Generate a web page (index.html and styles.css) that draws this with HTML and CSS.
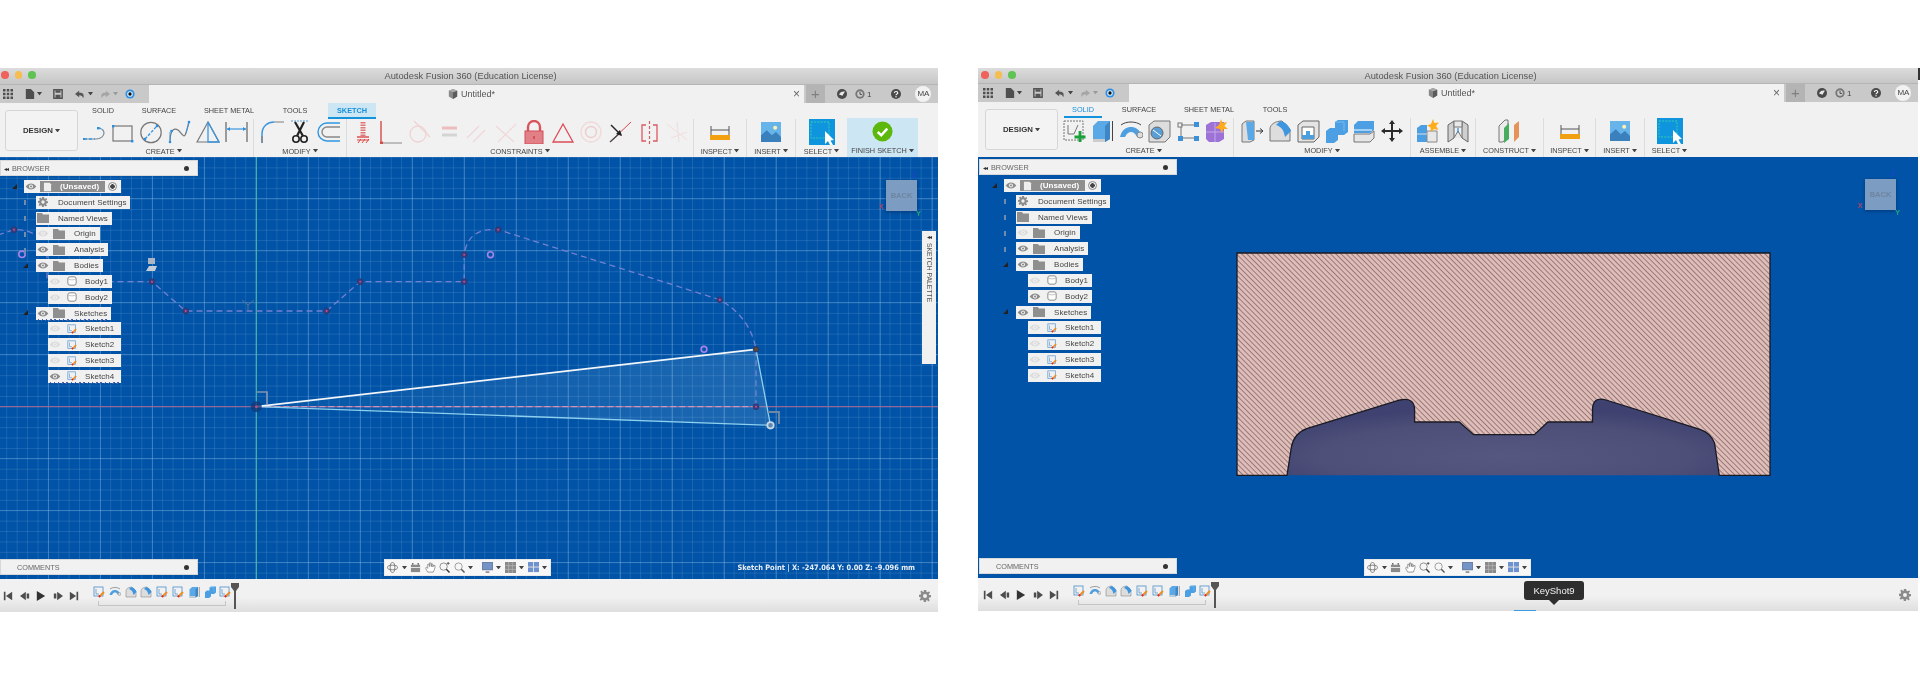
FILE: index.html
```html
<!DOCTYPE html>
<html lang="en">
<head>
<meta charset="utf-8">
<title>Autodesk Fusion 360</title>
<link rel="stylesheet" href="styles.css">
</head>
<body>
<svg class="defs" aria-hidden="true">
<defs>
<pattern id="hatch" patternUnits="userSpaceOnUse" width="3.7" height="3.7" patternTransform="rotate(45)"><rect width="3.7" height="3.7" fill="#dfbdb9"/><path d="M0 .5H3.7" stroke="#866868" stroke-width=".8"/></pattern>
<radialGradient id="hollow" cx=".5" cy=".75" r=".62"><stop offset="0" stop-color="#565780"/><stop offset=".7" stop-color="#4d4f78"/><stop offset="1" stop-color="#3f4270"/></radialGradient>
<linearGradient id="tfill" x1="0" y1="0" x2="1" y2="0"><stop offset="0" stop-color="#a8cdea" stop-opacity=".03"/><stop offset="1" stop-color="#a8cdea" stop-opacity=".17"/></linearGradient>
<linearGradient id="blueface" x1="0" y1="0" x2="0" y2="1"><stop offset="0" stop-color="#66b0e8"/><stop offset="1" stop-color="#3f8fd0"/></linearGradient>
</defs>
<symbol id="line" viewBox="0 0 24 24"><path d="M2 19H14C19 19 22 16 22 13S19 8 16 8" fill="none" stroke="#7a8b99" stroke-width="1.2"/><path d="M2 19H13M16 8C18 8 20 9 21 10" fill="none" stroke="#3d9ae0" stroke-width="1.3" stroke-dasharray="3 2"/><rect x="1" y="18" width="2" height="2" fill="#2b8fe0"/><rect x="15" y="7" width="2.4" height="2.4" fill="#2b8fe0"/></symbol>
<symbol id="rect" viewBox="0 0 24 24"><rect x="3" y="6" width="19" height="15" fill="none" stroke="#777" stroke-width="1.2"/><rect x="2" y="5" width="2.4" height="2.4" fill="#2b8fe0"/><rect x="21" y="20" width="2.4" height="2.4" fill="#2b8fe0"/></symbol>
<symbol id="circ" viewBox="0 0 24 24"><circle cx="12" cy="12.5" r="10.2" fill="none" stroke="#777" stroke-width="1.2"/><path d="M6 19L18 6" stroke="#3a96e0" stroke-width="1.4" stroke-dasharray="3 1.5"/><circle cx="6" cy="19" r="1.3" fill="#2b8fe0"/><circle cx="18" cy="6" r="1.3" fill="#2b8fe0"/></symbol>
<symbol id="spline" viewBox="0 0 24 24"><path d="M3 23C3 8 8 8 11 10S17 20 19 13S21 4 22 2" fill="none" stroke="#777" stroke-width="1.2"/><circle cx="3" cy="22" r="1.3" fill="#2b8fe0"/><circle cx="4.5" cy="11" r="1.3" fill="#2b8fe0"/><circle cx="22" cy="2" r="1.3" fill="#2b8fe0"/><path d="M3 22V12M19 13L22 3" stroke="#3a96e0" stroke-width="1"/></symbol>
<symbol id="tri" viewBox="0 0 24 24"><path d="M1 22L12 2L23 22Z" fill="none" stroke="#777" stroke-width="1.2"/><path d="M12 2L23 22H12Z" fill="none" stroke="#3a96e0" stroke-width="1.3"/></symbol>
<symbol id="dim" viewBox="0 0 24 24"><path d="M2 2V22M23 2V22" stroke="#777" stroke-width="1.4"/><path d="M3 9H22" stroke="#3a96e0" stroke-width="1.2"/><path d="M3 9l3-2v4zM22 9l-3-2v4z" fill="#2b8fe0"/></symbol>
<symbol id="fillet" viewBox="0 0 24 24"><path d="M2 23V14C2 6 8 2 14 2" fill="none" stroke="#3a96e0" stroke-width="1.5"/><path d="M14 2H24" stroke="#999" stroke-width="1.3"/><path d="M2 23V16" stroke="#888" stroke-width="1.6"/></symbol>
<symbol id="scis" viewBox="0 0 24 24"><path d="M3 1H21" stroke="#8fb8dc" stroke-width="1.3" stroke-dasharray="2 1"/><path d="M7 2L15 16M16 2L9 16" stroke="#222" stroke-width="2.2"/><circle cx="8" cy="19" r="3.2" fill="none" stroke="#222" stroke-width="1.6"/><circle cx="16" cy="19" r="3.2" fill="none" stroke="#222" stroke-width="1.6"/></symbol>
<symbol id="offs" viewBox="0 0 24 24"><path d="M24 3H11A9 9 0 0 0 11 21H24" fill="none" stroke="#2e96e2" stroke-width="1.4"/><path d="M24 7H11A5 5 0 0 0 11 17H24" fill="none" stroke="#888" stroke-width="1.4"/></symbol>
<symbol id="hatchc" viewBox="0 0 24 24"><path d="M12 2v14" stroke="#d77" stroke-width="5" stroke-dasharray="1.5 1"/><path d="M6 17H18" stroke="#d44" stroke-width="1.4"/><path d="M7 23l3-4M11 23l3-4M15 23l3-4" stroke="#d44" stroke-width="1"/><path d="M6 20H18" stroke="#d44"/></symbol>
<symbol id="perp" viewBox="0 0 24 24"><path d="M2 1V23" stroke="#d64a4a" stroke-width="1.4"/><path d="M2 23H23" stroke="#999" stroke-width="1.2"/><rect x="1" y="21.5" width="3" height="3" fill="#d64a4a"/></symbol>
<symbol id="tang" viewBox="0 0 24 24"><circle cx="10" cy="14" r="8" fill="none" stroke="#f0d2d2" stroke-width="1.3"/><path d="M6 1L22 17" stroke="#f0d2d2" stroke-width="1.2"/></symbol>
<symbol id="eq" viewBox="0 0 24 24"><path d="M5 8H20" stroke="#eebcbc" stroke-width="3"/><path d="M5 15H20" stroke="#d4d4d4" stroke-width="3"/></symbol>
<symbol id="par" viewBox="0 0 24 24"><path d="M2 18L14 6M8 22L20 10" stroke="#f0d6d6" stroke-width="1.2"/></symbol>
<symbol id="cross" viewBox="0 0 24 24"><path d="M2 6L20 22M4 22L22 4" stroke="#f0d8d8" stroke-width="1.2"/></symbol>
<symbol id="lock" viewBox="0 0 24 24"><path d="M6 13V7A6 6 0 0 1 18 7V13" fill="none" stroke="#d9545f" stroke-width="2.4"/><rect x="3" y="11" width="18" height="13" fill="#e28088" stroke="#d44d58"/><path d="M12 16v3" stroke="#c23"/></symbol>
<symbol id="trg" viewBox="0 0 24 24"><path d="M12 4L22 22H2Z" fill="none" stroke="#dc4b55" stroke-width="1.3"/></symbol>
<symbol id="conc" viewBox="0 0 24 24"><circle cx="12" cy="12" r="10" fill="none" stroke="#f2dada" stroke-width="1.4"/><circle cx="12" cy="12" r="5.5" fill="none" stroke="#efcccc" stroke-width="1.4"/></symbol>
<symbol id="mid" viewBox="0 0 24 24"><path d="M2 22L23 2" stroke="#d64a4a"/><path d="M2 22L12 13" stroke="#444" stroke-width="1.2"/><path d="M3 5L13 15" stroke="#222" stroke-width="1.4"/><path d="M14 16L8 14L12 10Z" fill="#222"/></symbol>
<symbol id="sym" viewBox="0 0 24 24"><path d="M9 5H5V21H9M16 5H20V21H16" fill="none" stroke="#da5a62" stroke-width="1.3"/><path d="M12.5 1V24" stroke="#da5a62" stroke-dasharray="3 2" stroke-width="1.2"/></symbol>
<symbol id="fade" viewBox="0 0 24 24"><path d="M2 4L22 20M12 2L14 22M22 12L6 18" stroke="#f1dddd" stroke-width="1" fill="none"/></symbol>
<symbol id="ruler" viewBox="0 0 24 24"><path d="M3 6V15M21 6V15M3 10H21" stroke="#555" stroke-width="1"/><rect x="2" y="15" width="20" height="5" fill="#f0a010"/></symbol>
<symbol id="ins" viewBox="0 0 24 24"><rect width="24" height="24" fill="#66b4ea"/><circle cx="17" cy="7" r="2.4" fill="#fff0b0"/><path d="M0 24V16L7 10L13 16L18 12L24 18V24Z" fill="#3a80bc"/></symbol>
<symbol id="sel" viewBox="0 0 26 26"><rect width="26" height="26" fill="#0f94de"/><rect x="2" y="3" width="18" height="16" fill="none" stroke="#36cbb4" stroke-width="1" stroke-dasharray="2 1.2"/><path d="M16 12V25L19 22L21.5 27L24 26L21.5 21.5L25 21Z" fill="#fff"/></symbol>
<symbol id="check" viewBox="0 0 22 22"><circle cx="11" cy="11" r="10.5" fill="#5cb80c"/><path d="M6 11.5L9.7 15L16 8" fill="none" stroke="#fff" stroke-width="2.6"/></symbol>
<symbol id="sk" viewBox="0 0 24 24"><rect x="2" y="2" width="19" height="19" fill="none" stroke="#777" stroke-dasharray="2 1"/><path d="M6 6V15H12L16 6" fill="none" stroke="#777"/><path d="M18 12V23M12.5 18H23.5" stroke="#1aa23a" stroke-width="2.8"/></symbol>
<symbol id="ext" viewBox="0 0 24 24"><path d="M3 7L8 2H20V20L15 23H3Z" fill="#5aa8e6"/><path d="M3 20H15V23H3Z" fill="#ccc"/><path d="M15 7V23L20 20V2Z" fill="#3f86c4"/><path d="M22.5 2V22" stroke="#444"/></symbol>
<symbol id="rev" viewBox="0 0 24 24"><path d="M1 18C3 10 8 8 12 8S21 10 23 18H18C16 14 14 13 12 13S8 14 6 18Z" fill="#4f9fe0"/><ellipse cx="21" cy="16" rx="3" ry="3" fill="#ddd" stroke="#888"/><path d="M2 6C7 2 17 2 22 6" fill="none" stroke="#444"/></symbol>
<symbol id="hole" viewBox="0 0 24 24"><path d="M2 6L7 2H23V18L18 23H2Z" fill="#ddd" stroke="#777"/><circle cx="10" cy="14" r="6" fill="#5a9ed6" stroke="#666"/><path d="M6 11L14 17" stroke="#fff"/></symbol>
<symbol id="pat" viewBox="0 0 24 24"><path d="M5 6H19M5 8V19M7 19H19" stroke="#777" fill="none"/><rect x="2" y="4" width="4" height="4" fill="none" stroke="#777"/><rect x="18" y="3" width="5" height="5" fill="#3c90d8"/><rect x="2" y="17" width="5" height="5" fill="#3c90d8"/><rect x="18" y="17" width="5" height="5" fill="#3c90d8"/></symbol>
<symbol id="magic" viewBox="0 0 24 24"><path d="M2 6L7 3H20V20L15 23H5L2 20Z" fill="#9c72d6"/><path d="M2 13H20M11 4V23" stroke="#c5a8ea"/><path d="M17 0L18.5 4L23 3L20.5 7L24 10L19.5 10L18 14L16 10L11 9L15 6Z" fill="#ffac1c"/></symbol>
<symbol id="press" viewBox="0 0 24 24"><path d="M2 5L6 2H14V21L10 23H2Z" fill="#ddd" stroke="#777"/><path d="M6 3H14V21H8Z" fill="#5aa8e6"/><path d="M16 12H22M20 9.5L23 12L20 14.5" stroke="#333" fill="none"/></symbol>
<symbol id="rfil" viewBox="0 0 24 24"><path d="M2 22V10C2 5 8 2 14 2L22 10V22Z" fill="#ddd" stroke="#777"/><path d="M12 2C18 3 21 7 23 12L17 18C16 12 14 8 8 6Z" fill="#3f96de"/></symbol>
<symbol id="shell" viewBox="0 0 24 24"><path d="M2 6L7 2H23V18L18 23H2Z" fill="#e4e4e4" stroke="#666"/><path d="M6 8H18V20H6Z" fill="#fff" stroke="#666"/><path d="M10 12H14V16H18V20H6V16H10Z" fill="#4d9edc"/></symbol>
<symbol id="comb" viewBox="0 0 24 24"><path d="M2 12L6 9H11V3L14 1H24V13L20 16H14V21L10 24H2Z" fill="#4c9fe2"/><path d="M11 3H20V12" fill="none" stroke="#75bbef"/></symbol>
<symbol id="offf" viewBox="0 0 24 24"><path d="M2 6L6 2H22V11L18 14H2Z" fill="#4c9fe2"/><path d="M2 15H18L22 12V19L18 23H2Z" fill="#e6e6e6" stroke="#777"/><path d="M2 11H20" stroke="#fff"/></symbol>
<symbol id="move" viewBox="0 0 24 24"><path d="M12 1L15 5H13V11H19V9L23 12L19 15V13H13V19H15L12 23L9 19H11V13H5V15L1 12L5 9V11H11V5H9Z" fill="#2b2b2b"/></symbol>
<symbol id="asm" viewBox="0 0 24 24"><path d="M1 9L5 6H11V23H1Z" fill="#4c9fe2"/><path d="M11 12H21V23H11Z" fill="#e8e8e8" stroke="#888"/><path d="M1 15H11" stroke="#ddd"/><path d="M17 0L18.3 4L23 3.5L20 7L22.5 11L18 10L15 13L14.5 8.5L11 6.5L15 5Z" fill="#ffac1c"/></symbol>
<symbol id="joint" viewBox="0 0 24 24"><path d="M2 6L8 2V19L2 23ZM22 6L16 2V19L22 23Z" fill="#cfcfcf" stroke="#666"/><path d="M8 2H16V8H8ZM8 19L12 12L16 19" fill="#e9e9e9" stroke="#777"/><path d="M12 9V14" stroke="#3c90d8" stroke-width="1.3"/></symbol>
<symbol id="plane" viewBox="0 0 24 24"><path d="M1 7L7 1H10V17L5 23H1Z" fill="#ececec" stroke="#777"/><path d="M6 9L11 4V20L6 24Z" fill="#49ac61"/><path d="M16 6L21 2V18L16 23Z" fill="#e4935a"/></symbol>
<symbol id="apps" viewBox="0 0 12 12"><path d="M0 0h3v3H0zM4.5 0h3v3h-3zM9 0h3v3H9zM0 4.5h3v3H0zM4.5 4.5h3v3h-3zM9 4.5h3v3H9zM0 9h3v3H0zM4.5 9h3v3h-3zM9 9h3v3H9z" fill="#4f4f4f"/></symbol>
<symbol id="doc" viewBox="0 0 12 12"><path d="M1 0H7L11 4V12H1Z" fill="#4f4f4f"/></symbol>
<symbol id="save" viewBox="0 0 12 12"><path d="M1 1H11V11H1Z" fill="none" stroke="#555" stroke-width="1.8"/><path d="M3 1.5H9V4.5H3ZM3 7H9V11H3Z" fill="#555"/></symbol>
<symbol id="undo" viewBox="0 0 12 12"><path d="M5 2L0 6L5 10V7.5C8 7.5 9 9 10 11C11.5 6 9 4 5 4.5Z" fill="#555"/></symbol>
<symbol id="redo" viewBox="0 0 12 12"><path d="M7 2L12 6L7 10V7.5C4 7.5 3 9 2 11C.5 6 3 4 7 4.5Z" fill="#a5a5a5"/></symbol>
<symbol id="target" viewBox="0 0 12 12"><circle cx="6" cy="6" r="5.5" fill="#2f8fe4"/><circle cx="6" cy="6" r="3.4" fill="#d9ecfb"/><circle cx="6" cy="6" r="2" fill="#111"/></symbol>
<symbol id="caret" viewBox="0 0 6 4"><path d="M0 0H6L3 4Z" fill="#444"/></symbol>
<symbol id="cube" viewBox="0 0 12 12"><path d="M1 2L6 0L11 2V9L6 12L1 9Z" fill="#888"/><path d="M6 4V12L11 9V2Z" fill="#5c5c5c"/><path d="M1 2L6 0L11 2L6 4Z" fill="#aaa"/></symbol>
<symbol id="hist" viewBox="0 0 12 12"><circle cx="6" cy="6" r="6" fill="#4a4a4a"/><path d="M2.5 6.5C4 3 7 3 9.5 3L6.5 8Z" fill="#e8e8e8"/></symbol>
<symbol id="clock" viewBox="0 0 12 12"><circle cx="6" cy="6" r="5.6" fill="#777"/><circle cx="6" cy="6" r="3.4" fill="#ccc"/><path d="M6 3.5V6.5H8.3" fill="none" stroke="#333"/></symbol>
<symbol id="help" viewBox="0 0 12 12"><circle cx="6" cy="6" r="6" fill="#4a4a4a"/><path d="M4 4.7C4 2.5 8.2 2.5 8.2 4.8C8.2 6.2 6 6 6 7.5" fill="none" stroke="#fff" stroke-width="1.3"/><circle cx="6" cy="9.3" r=".8" fill="#fff"/></symbol>
<symbol id="eye" viewBox="0 0 12 8"><path d="M0 4C3 -.5 9 -.5 12 4C9 8.5 3 8.5 0 4Z" fill="currentColor"/><circle cx="6" cy="4" r="2.3" fill="#f1f1f1"/><circle cx="6" cy="4" r="1.2" fill="currentColor"/></symbol>
<symbol id="folder" viewBox="0 0 12 10"><path d="M0 0H5L6 1.500H12V10H0Z" fill="#8f8f8f"/></symbol>
<symbol id="gear" viewBox="0 0 12 12"><path d="M4.8 0H7.2L7.5 1.7L8.8 2.2L10.2 1.2L11 2.8L9.800 3.900L10.100 5.100L12 5V7.200L10.300 7.500L9.800 8.800L10.800 10.200L9.200 11.400L8.100 10.100L7.200 10.300L7 12H4.800L4.500 10.300L3.200 9.800L1.800 10.800L.6 9.200L1.900 8.100L1.700 7.200L0 7V4.800L1.700 4.500L2.200 3.200L1.200 1.800L2.800 .6L3.900 1.900L4.800 1.700Z" fill="#8b8b8b"/><circle cx="6" cy="6" r="2" fill="#f1f1f1"/></symbol>
<symbol id="body" viewBox="0 0 12 12"><rect x="1" y="1" width="10" height="10" rx="2.5" fill="#fdfdfd" stroke="#777"/><path d="M1 3.5C4 5 8 5 11 3.5" fill="none" stroke="#bbb"/></symbol>
<symbol id="skt" viewBox="0 0 12 12"><rect x="1" y="1" width="9" height="9" fill="none" stroke="#5d9bd0" stroke-width=".9"/><path d="M3 3V8H6" fill="none" stroke="#5d9bd0" stroke-width=".8"/><path d="M6 11L11 6" stroke="#f08c1e" stroke-width="1.9"/><path d="M6 11L7 9.5" stroke="#d23" stroke-width="1.9"/></symbol>
<symbol id="paper" viewBox="0 0 12 14"><path d="M1 1H9L11 3V13H1Z" fill="#eee"/></symbol>
<symbol id="first" viewBox="0 0 12 12"><path d="M1 1H3V11H1ZM11 1V11L3.5 6Z" fill="#4d4d4d"/></symbol>
<symbol id="prev" viewBox="0 0 12 12"><path d="M7 1V11L0 6ZM8 3H11V9H8Z" fill="#4d4d4d"/></symbol>
<symbol id="play" viewBox="0 0 12 12"><path d="M1 0L11 6L1 12Z" fill="#333"/></symbol>
<symbol id="next" viewBox="0 0 12 12"><path d="M5 1V11L12 6ZM1 3H4V9H1Z" fill="#4d4d4d"/></symbol>
<symbol id="last" viewBox="0 0 12 12"><path d="M9 1H11V11H9ZM1 1V11L8.5 6Z" fill="#4d4d4d"/></symbol>
<symbol id="marker" viewBox="0 0 8 26"><path d="M0 0H8V4L5 8V26H3V8L0 4Z" fill="#555"/></symbol>
<symbol id="orbit" viewBox="0 0 12 12"><ellipse cx="6" cy="6" rx="5.5" ry="2.5" fill="none" stroke="#777"/><ellipse cx="6" cy="6" rx="2.5" ry="5.5" fill="none" stroke="#777"/></symbol>
<symbol id="look" viewBox="0 0 12 12"><rect x="1" y="3" width="10" height="8" fill="#8a8a8a"/><path d="M1 6H11" stroke="#eee"/><path d="M3 1V3M9 1V3" stroke="#666" stroke-width="1.5"/></symbol>
<symbol id="hand" viewBox="0 0 12 12"><path d="M3 11C1 8 0 6 1.5 5.5L3 7V2.500L4.5 2.500L5 5V1L6.500 1L7 5V2L8.500 2.300V5.500L9.500 3.500L11 4C11 7 10 9 9 11Z" fill="#fff" stroke="#777" stroke-width=".8"/></symbol>
<symbol id="zoomp" viewBox="0 0 12 12"><circle cx="5" cy="5" r="4" fill="none" stroke="#888"/><path d="M8 8L11.5 11.5" stroke="#333" stroke-width="1.5"/><path d="M10 0V3M8.5 1.5H11.5" stroke="#555"/></symbol>
<symbol id="zoomf" viewBox="0 0 12 12"><circle cx="5" cy="5" r="4" fill="none" stroke="#999"/><path d="M8 8L11.5 11.5" stroke="#555" stroke-width="1.5"/></symbol>
<symbol id="disp" viewBox="0 0 12 12"><rect width="12" height="9" fill="#6b7f9e"/><rect x="1" y="1" width="10" height="7" fill="#7494c8"/><path d="M4 11H8" stroke="#777" stroke-width="1.5"/></symbol>
<symbol id="gridv" viewBox="0 0 12 12"><rect width="12" height="12" fill="#8a8a8a"/><path d="M4 0V12M8 0V12M0 4H12M0 8H12" stroke="#bbb" stroke-width=".7"/></symbol>
<symbol id="views" viewBox="0 0 12 12"><rect width="12" height="11" fill="#6d92cf"/><path d="M6 0V11M0 5.500H12" stroke="#e6e6e6"/></symbol>
</svg>

<div class="page">

<section class="win win-l">
  <header class="titlebar">
    <div class="lights"><i class="red"></i><i class="amber"></i><i class="green"></i></div>
    <span>Autodesk Fusion 360 (Education License)</span>
  </header>
  <div class="tabbar">
    <div class="qat">
      <svg class="q apps"><use href="#apps"/></svg>
      <svg class="q file"><use href="#doc"/></svg><svg class="c"><use href="#caret"/></svg>
      <svg class="q save"><use href="#save"/></svg>
      <svg class="q undo"><use href="#undo"/></svg><svg class="c"><use href="#caret"/></svg>
      <svg class="q redo"><use href="#redo"/></svg><svg class="c dim"><use href="#caret"/></svg>
      <svg class="q tgt"><use href="#target"/></svg>
    </div>
    <div class="doctab"><div class="docname"><svg class="q"><use href="#cube"/></svg><span>Untitled*</span></div><span class="close">×</span></div>
    <div class="acct">
      <span class="plus">+</span>
      <svg class="q hist"><use href="#hist"/></svg>
      <svg class="q clock"><use href="#clock"/></svg><span class="num">1</span>
      <svg class="q help"><use href="#help"/></svg>
      <span class="me">MA</span>
    </div>
  </div>
  <div class="toolbar">
    <button class="design">DESIGN <svg class="c"><use href="#caret"/></svg></button>
    <div class="ribbon">
      <nav class="tabs"><span class="t1">SOLID</span><span class="t2">SURFACE</span><span class="t3">SHEET METAL</span><span class="t4">TOOLS</span><span class="t5 on">SKETCH</span></nav>
      <div class="groups">
        <div class="grp g-create"><div class="icons"><svg class="i"><use href="#line"/></svg><svg class="i"><use href="#rect"/></svg><svg class="i"><use href="#circ"/></svg><svg class="i"><use href="#spline"/></svg><svg class="i"><use href="#tri"/></svg><svg class="i"><use href="#dim"/></svg></div><label>CREATE <svg class="c"><use href="#caret"/></svg></label></div>
        <div class="grp g-smod"><div class="icons"><svg class="i"><use href="#fillet"/></svg><svg class="i"><use href="#scis"/></svg><svg class="i"><use href="#offs"/></svg></div><label>MODIFY <svg class="c"><use href="#caret"/></svg></label></div>
        <div class="grp g-cons"><div class="icons"><svg class="i"><use href="#hatchc"/></svg><svg class="i"><use href="#perp"/></svg><svg class="i"><use href="#tang"/></svg><svg class="i"><use href="#eq"/></svg><svg class="i"><use href="#par"/></svg><svg class="i"><use href="#cross"/></svg><svg class="i"><use href="#lock"/></svg><svg class="i"><use href="#trg"/></svg><svg class="i"><use href="#conc"/></svg><svg class="i"><use href="#mid"/></svg><svg class="i"><use href="#sym"/></svg><svg class="i"><use href="#fade"/></svg></div><label>CONSTRAINTS <svg class="c"><use href="#caret"/></svg></label></div>
        <div class="grp g-insp"><div class="icons"><svg class="i"><use href="#ruler"/></svg></div><label>INSPECT <svg class="c"><use href="#caret"/></svg></label></div>
        <div class="grp g-ins"><div class="icons"><svg class="i s20"><use href="#ins"/></svg></div><label>INSERT <svg class="c"><use href="#caret"/></svg></label></div>
        <div class="grp g-sel"><div class="icons"><svg class="i s26"><use href="#sel"/></svg></div><label>SELECT <svg class="c"><use href="#caret"/></svg></label></div>
        <div class="grp g-fin"><div class="icons"><svg class="i s22"><use href="#check"/></svg></div><label>FINISH SKETCH <svg class="c"><use href="#caret"/></svg></label></div>
      </div>
    </div>
  </div>

  <main class="canvas grid">
    <svg class="art" viewBox="0 0 940 422">
      <path d="M258.3 0V422" stroke="#46c0a4" stroke-width="1.2" opacity=".85"/>
      <path d="M2 249.7H940" stroke="#a8628f" stroke-width="1"/>
      <path d="M258.3 249.7L758 192.3L772.5 268.3Z" fill="url(#tfill)"/>
      <path d="M0 78L16 72.7Q44 72 49 97.7V124.7H154L187.7 154H328.6L362.2 124.7H466.2V97.7Q470 70 500.2 72.7L721.8 142.7Q752 160 758 192.3V249.7" fill="none" stroke="#7480d2" stroke-width="1.3" stroke-dasharray="6 4"/>
      <path d="M258.3 249.7H758" stroke="#d4a0c8" stroke-width="1" stroke-dasharray="6 3"/>
      <path d="M258.3 249.7L772.5 268.3L758 192.3" fill="none" stroke="#8dd0ee" stroke-width="1.3"/>
      <path d="M258.3 249.7L758 192.3" stroke="#f2f6fa" stroke-width="1.7"/>
      <g fill="#3a3d80" stroke="#2a3670" stroke-width=".8"><circle cx="154" cy="124.7" r="2.9"/><circle cx="187.7" cy="154" r="2.9"/><circle cx="16" cy="72.7" r="2.9"/><circle cx="328.6" cy="154" r="2.9"/><circle cx="362.2" cy="124.7" r="2.9"/><circle cx="466.2" cy="124.7" r="2.9"/><circle cx="466.2" cy="97.7" r="2.9"/><circle cx="500.2" cy="72.7" r="2.9"/><circle cx="721.8" cy="142.7" r="2.9"/><circle cx="758" cy="249.7" r="2.9"/></g>
      <g fill="#d2487e"><circle cx="154" cy="124.7" r="1"/><circle cx="187.7" cy="154" r="1"/><circle cx="16" cy="72.7" r="1"/><circle cx="328.6" cy="154" r="1"/><circle cx="362.2" cy="124.7" r="1"/><circle cx="466.2" cy="124.7" r="1"/><circle cx="466.2" cy="97.7" r="1"/><circle cx="500.2" cy="72.7" r="1"/><circle cx="721.8" cy="142.7" r="1"/><circle cx="758" cy="249.7" r="1"/></g>
      <circle cx="258.3" cy="249.7" r="5.5" fill="#123a78" opacity=".8"/><circle cx="258.3" cy="249.7" r="1.3" fill="#d2487e"/>
      <circle cx="758" cy="192.3" r="2.7" fill="#5a4a30" stroke="#2a3670"/>
      <circle cx="772.5" cy="268.3" r="3.2" fill="#5c86ae" stroke="#c6d6e4" stroke-width="1.8"/>
      <g fill="none" stroke="#a583ea" stroke-width="1.6"><circle cx="492.5" cy="97.7" r="2.9"/><circle cx="706" cy="192.3" r="2.9"/><circle cx="24" cy="97.3" r="3.2"/></g>
      <path d="M259 235H269V247" fill="none" stroke="#7f97b3" stroke-width="1.7"/><path d="M770 255H781V267" fill="none" stroke="#6f88a6" stroke-width="1.9"/>
      <path d="M244 143L250 148M256 143L250 148V154" fill="none" stroke="#54759e" stroke-width="1"/>
      <rect x="150" y="101" width="7" height="6" fill="#aab6c4"/><path d="M148 114L151 109H159L157 114Z" fill="#c4ccd6"/>
    </svg>
    <div class="panel browser"><span class="pin">◂◂</span><span class="ptitle">BROWSER</span><span class="dot"></span></div>
    <div class="tree">
      <div class="line l0"><i class="arrow open"></i><div class="row root"><svg class="eye on"><use href="#eye"/></svg><div class="rootname"><svg class="paper"><use href="#paper"/></svg><b>(Unsaved)</b></div><span class="radio"></span></div></div>
      <div class="line l1"><i class="arrow"></i><div class="row plain"><svg class="ico gear"><use href="#gear"/></svg><span>Document Settings</span></div></div>
      <div class="line l1"><i class="arrow"></i><div class="row plain"><svg class="ico gear"><use href="#folder"/></svg><span>Named Views</span></div></div>
      <div class="line l1"><i class="arrow"></i><div class="row"><svg class="eye"><use href="#eye"/></svg><svg class="ico"><use href="#folder"/></svg><span>Origin</span></div></div>
      <div class="line l1"><i class="arrow"></i><div class="row"><svg class="eye on"><use href="#eye"/></svg><svg class="ico"><use href="#folder"/></svg><span>Analysis</span></div></div>
      <div class="line l1"><i class="arrow open"></i><div class="row"><svg class="eye on"><use href="#eye"/></svg><svg class="ico"><use href="#folder"/></svg><span>Bodies</span></div></div>
      <div class="line l2"><div class="row"><svg class="eye"><use href="#eye"/></svg><svg class="ico"><use href="#body"/></svg><span>Body1</span></div></div>
      <div class="line l2"><div class="row"><svg class="eye"><use href="#eye"/></svg><svg class="ico"><use href="#body"/></svg><span>Body2</span></div></div>
      <div class="line l1"><i class="arrow open"></i><div class="row active"><svg class="eye on"><use href="#eye"/></svg><svg class="ico"><use href="#folder"/></svg><span>Sketches</span></div></div>
      <div class="line l2"><div class="row sk"><svg class="eye"><use href="#eye"/></svg><svg class="ico"><use href="#skt"/></svg><span>Sketch1</span></div></div>
      <div class="line l2"><div class="row sk"><svg class="eye"><use href="#eye"/></svg><svg class="ico"><use href="#skt"/></svg><span>Sketch2</span></div></div>
      <div class="line l2"><div class="row sk"><svg class="eye"><use href="#eye"/></svg><svg class="ico"><use href="#skt"/></svg><span>Sketch3</span></div></div>
      <div class="line l2"><div class="row sk active"><svg class="eye on"><use href="#eye"/></svg><svg class="ico"><use href="#skt"/></svg><span>Sketch4</span></div></div>
    </div>
    <div class="cube"><span>BACK</span><i class="ax z">Z</i><i class="ax x">X</i><i class="ax y">Y</i></div>
    <div class="palette"><span class="pin">◂◂</span><span class="vt">SKETCH PALETTE</span></div>
    <div class="panel comments"><span class="ptitle">COMMENTS</span><span class="dot"></span></div>
    <div class="navbar"><svg class="n"><use href="#orbit"/></svg><svg class="c"><use href="#caret"/></svg><svg class="n"><use href="#look"/></svg><svg class="n"><use href="#hand"/></svg><svg class="n"><use href="#zoomp"/></svg><svg class="n"><use href="#zoomf"/></svg><svg class="c"><use href="#caret"/></svg><svg class="n sp"><use href="#disp"/></svg><svg class="c"><use href="#caret"/></svg><svg class="n"><use href="#gridv"/></svg><svg class="c"><use href="#caret"/></svg><svg class="n"><use href="#views"/></svg><svg class="c"><use href="#caret"/></svg></div>
    <div class="status">Sketch Point | X: -247.064 Y: 0.00 Z: -9.096 mm</div>
  </main>

  <footer class="timeline">
    <div class="ctl"><svg><use href="#first"/></svg><svg><use href="#prev"/></svg><svg><use href="#play"/></svg><svg><use href="#next"/></svg><svg><use href="#last"/></svg></div>
    <div class="track"><svg><use href="#skt"/></svg><svg><use href="#rev"/></svg><svg><use href="#rfil"/></svg><svg><use href="#rfil"/></svg><svg><use href="#skt"/></svg><svg><use href="#skt"/></svg><svg><use href="#ext"/></svg><svg><use href="#comb"/></svg><svg><use href="#skt"/></svg></div>
    <svg class="marker"><use href="#marker"/></svg>
    <svg class="tgear"><use href="#gear"/></svg>
  </footer>
</section>

<section class="win win-r">
  <header class="titlebar">
    <div class="lights"><i class="red"></i><i class="amber"></i><i class="green"></i></div>
    <span>Autodesk Fusion 360 (Education License)</span>
  </header>
  <div class="tabbar">
    <div class="qat">
      <svg class="q apps"><use href="#apps"/></svg>
      <svg class="q file"><use href="#doc"/></svg><svg class="c"><use href="#caret"/></svg>
      <svg class="q save"><use href="#save"/></svg>
      <svg class="q undo"><use href="#undo"/></svg><svg class="c"><use href="#caret"/></svg>
      <svg class="q redo"><use href="#redo"/></svg><svg class="c dim"><use href="#caret"/></svg>
      <svg class="q tgt"><use href="#target"/></svg>
    </div>
    <div class="doctab"><div class="docname"><svg class="q"><use href="#cube"/></svg><span>Untitled*</span></div><span class="close">×</span></div>
    <div class="acct">
      <span class="plus">+</span>
      <svg class="q hist"><use href="#hist"/></svg>
      <svg class="q clock"><use href="#clock"/></svg><span class="num">1</span>
      <svg class="q help"><use href="#help"/></svg>
      <span class="me">MA</span>
    </div>
  </div>
  <div class="toolbar">
    <button class="design">DESIGN <svg class="c"><use href="#caret"/></svg></button>
    <div class="ribbon">
      <nav class="tabs"><span class="t1 cur">SOLID</span><span class="t2">SURFACE</span><span class="t3">SHEET METAL</span><span class="t4">TOOLS</span></nav>
      <div class="groups">
        <div class="grp g-create"><div class="icons"><svg class="i"><use href="#sk"/></svg><svg class="i"><use href="#ext"/></svg><svg class="i"><use href="#rev"/></svg><svg class="i"><use href="#hole"/></svg><svg class="i"><use href="#pat"/></svg><svg class="i"><use href="#magic"/></svg></div><label>CREATE <svg class="c"><use href="#caret"/></svg></label></div>
        <div class="grp g-mod"><div class="icons"><svg class="i"><use href="#press"/></svg><svg class="i"><use href="#rfil"/></svg><svg class="i"><use href="#shell"/></svg><svg class="i"><use href="#comb"/></svg><svg class="i"><use href="#offf"/></svg><svg class="i"><use href="#move"/></svg></div><label>MODIFY <svg class="c"><use href="#caret"/></svg></label></div>
        <div class="grp g-asm"><div class="icons"><svg class="i"><use href="#asm"/></svg><svg class="i"><use href="#joint"/></svg></div><label>ASSEMBLE <svg class="c"><use href="#caret"/></svg></label></div>
        <div class="grp g-con"><div class="icons"><svg class="i"><use href="#plane"/></svg></div><label>CONSTRUCT <svg class="c"><use href="#caret"/></svg></label></div>
        <div class="grp g-insp2"><div class="icons"><svg class="i"><use href="#ruler"/></svg></div><label>INSPECT <svg class="c"><use href="#caret"/></svg></label></div>
        <div class="grp g-ins"><div class="icons"><svg class="i s20"><use href="#ins"/></svg></div><label>INSERT <svg class="c"><use href="#caret"/></svg></label></div>
        <div class="grp g-sel2"><div class="icons"><svg class="i s26"><use href="#sel"/></svg></div><label>SELECT <svg class="c"><use href="#caret"/></svg></label></div>
      </div>
    </div>
  </div>

  <main class="canvas">
    <svg class="art" viewBox="0 0 940 421">
      <path d="M309 318.3L313.4 290Q316 276 329.5 271.3L422 243Q436.6 240 436.6 253V265H481.3L495.6 277.7H556.3L569.9 265H614.5V253Q614.5 239 628 243L722 272.3Q733 276 736.6 286.3L741.3 318.3Z" fill="url(#hollow)"/>
      <path d="M259 96H792V318.3H741.3L736.6 286.3Q733 276 722 272.3L628 243Q614.5 239 614.5 253V265H569.9L556.3 277.7H495.6L481.3 265H436.6V253Q436.6 240 422 243L329.5 271.3Q316 276 313.4 290L309 318.3H259Z" fill="url(#hatch)" stroke="#1a1a22" stroke-width="1.3"/>
    </svg>
    <div class="panel browser"><span class="pin">◂◂</span><span class="ptitle">BROWSER</span><span class="dot"></span></div>
    <div class="tree">
      <div class="line l0"><i class="arrow open"></i><div class="row root"><svg class="eye on"><use href="#eye"/></svg><div class="rootname"><svg class="paper"><use href="#paper"/></svg><b>(Unsaved)</b></div><span class="radio"></span></div></div>
      <div class="line l1"><i class="arrow"></i><div class="row plain"><svg class="ico gear"><use href="#gear"/></svg><span>Document Settings</span></div></div>
      <div class="line l1"><i class="arrow"></i><div class="row plain"><svg class="ico gear"><use href="#folder"/></svg><span>Named Views</span></div></div>
      <div class="line l1"><i class="arrow"></i><div class="row"><svg class="eye"><use href="#eye"/></svg><svg class="ico"><use href="#folder"/></svg><span>Origin</span></div></div>
      <div class="line l1"><i class="arrow"></i><div class="row"><svg class="eye on"><use href="#eye"/></svg><svg class="ico"><use href="#folder"/></svg><span>Analysis</span></div></div>
      <div class="line l1"><i class="arrow open"></i><div class="row"><svg class="eye on"><use href="#eye"/></svg><svg class="ico"><use href="#folder"/></svg><span>Bodies</span></div></div>
      <div class="line l2"><div class="row"><svg class="eye"><use href="#eye"/></svg><svg class="ico"><use href="#body"/></svg><span>Body1</span></div></div>
      <div class="line l2"><div class="row"><svg class="eye on"><use href="#eye"/></svg><svg class="ico"><use href="#body"/></svg><span>Body2</span></div></div>
      <div class="line l1"><i class="arrow open"></i><div class="row"><svg class="eye on"><use href="#eye"/></svg><svg class="ico"><use href="#folder"/></svg><span>Sketches</span></div></div>
      <div class="line l2"><div class="row sk"><svg class="eye"><use href="#eye"/></svg><svg class="ico"><use href="#skt"/></svg><span>Sketch1</span></div></div>
      <div class="line l2"><div class="row sk"><svg class="eye"><use href="#eye"/></svg><svg class="ico"><use href="#skt"/></svg><span>Sketch2</span></div></div>
      <div class="line l2"><div class="row sk"><svg class="eye"><use href="#eye"/></svg><svg class="ico"><use href="#skt"/></svg><span>Sketch3</span></div></div>
      <div class="line l2"><div class="row sk"><svg class="eye"><use href="#eye"/></svg><svg class="ico"><use href="#skt"/></svg><span>Sketch4</span></div></div>
    </div>
    <div class="cube"><span>BACK</span><i class="ax z">Z</i><i class="ax x">X</i><i class="ax y">Y</i></div>
    <div class="panel comments"><span class="ptitle">COMMENTS</span><span class="dot"></span></div>
    <div class="navbar"><svg class="n"><use href="#orbit"/></svg><svg class="c"><use href="#caret"/></svg><svg class="n"><use href="#look"/></svg><svg class="n"><use href="#hand"/></svg><svg class="n"><use href="#zoomp"/></svg><svg class="n"><use href="#zoomf"/></svg><svg class="c"><use href="#caret"/></svg><svg class="n sp"><use href="#disp"/></svg><svg class="c"><use href="#caret"/></svg><svg class="n"><use href="#gridv"/></svg><svg class="c"><use href="#caret"/></svg><svg class="n"><use href="#views"/></svg><svg class="c"><use href="#caret"/></svg></div>
  </main>

  <footer class="timeline">
    <div class="ctl"><svg><use href="#first"/></svg><svg><use href="#prev"/></svg><svg><use href="#play"/></svg><svg><use href="#next"/></svg><svg><use href="#last"/></svg></div>
    <div class="track"><svg><use href="#skt"/></svg><svg><use href="#rev"/></svg><svg><use href="#rfil"/></svg><svg><use href="#rfil"/></svg><svg><use href="#skt"/></svg><svg><use href="#skt"/></svg><svg><use href="#ext"/></svg><svg><use href="#comb"/></svg><svg><use href="#skt"/></svg></div>
    <svg class="marker"><use href="#marker"/></svg>
    <svg class="tgear"><use href="#gear"/></svg>
    <div class="tip">KeyShot9</div>
    <i class="dock"></i>
  </footer>
</section>

</div>
</body>
</html>
```

FILE: styles.css
```css
* { box-sizing: border-box; }
html, body { margin: 0; height: 681px; overflow: hidden; background: #fff; }
body { font-family: "Liberation Sans", Arial, sans-serif; color: #444; }
.defs { position: absolute; width: 0; height: 0; }

.page { display: flex; gap: 40px; padding-top: 68px; }
.win { width: 940px; flex: none; display: flex; flex-direction: column; position: relative; filter: blur(.3px); }
.win-l { margin-left: -2px; height: 544px; }
.win-r { height: 543px; }
.win-r::after { content: ""; position: absolute; right: -2px; top: 0; width: 2px; height: 12px; background: #333; }

/* Title bar */
.titlebar { height: 17px; flex: none; position: relative; display: flex; align-items: center; justify-content: center; padding-left: 5px; font-size: 9.3px; color: #555; background: linear-gradient(#dcdcdc, #c6c6c6); border-bottom: 1px solid #b5b5b5; }
.win-r .titlebar { height: 16px; }
.lights { position: absolute; left: 3px; top: 3px; display: flex; gap: 6px; }
.lights i { width: 7.5px; height: 7.5px; border-radius: 50%; }
.red { background: #f0625c; }
.amber { background: #f6bd50; }
.green { background: #5fc454; }

/* Tab bar */
.tabbar { height: 18px; flex: none; display: flex; background: #c9c9c9; }
.qat { width: 151px; flex: none; display: flex; align-items: center; padding-left: 5px; }
.q { width: 10px; height: 10px; flex: none; }
.c { width: 5px; height: 3.5px; flex: none; }
.c.dim { opacity: .35; }
.qat .file { margin-left: 12px; margin-right: 2px; }
.qat .save { margin-left: 11px; }
.qat .undo { margin-left: 12px; margin-right: 3px; }
.qat .redo { margin-left: 7px; margin-right: 3px; }
.qat .tgt { margin-left: 7px; }
.doctab { width: 655px; flex: none; display: flex; align-items: center; background: #f1f1f1; font-size: 9px; color: #555; padding-left: 299px; }
.docname { display: flex; align-items: center; gap: 3px; }
.close { margin-left: auto; margin-right: 4px; font-size: 12px; color: #666; }
.acct { flex: 1; display: flex; align-items: center; }
.plus { width: 19px; height: 18px; background: #b4b4b4; color: #808080; font-size: 15px; line-height: 18px; text-align: center; margin-left: 2px; }
.acct .hist { margin-left: 12px; }
.acct .clock { margin-left: 8px; }
.num { font-size: 8px; margin-left: 2px; }
.acct .help { margin-left: 20px; }
.me { width: 16px; height: 16px; border-radius: 50%; margin-left: 14px; background: #f2f2f2; font-size: 8px; line-height: 16px; text-align: center; }

/* Ribbon */
.toolbar { height: 54px; flex: none; display: flex; background: #f1f1f1; }
.win-r .toolbar { height: 55px; }
.design { width: 73px; height: 41px; margin: 7px 4px 0 7px; flex: none; background: #f3f3f3; border: 1px solid #d6d6d6; border-radius: 3px; font: bold 7.8px "Liberation Sans", Arial, sans-serif; color: #333; padding: 0; }
.design .c { vertical-align: 1px; }
.ribbon { flex: 1; display: flex; flex-direction: column; min-width: 0; }
.tabs { height: 16px; flex: none; display: flex; gap: 16px; padding-left: 2px; font-size: 7.3px; color: #444; }
.tabs span { text-align: center; line-height: 16px; }
.t1 { width: 38px; }
.t2 { width: 42px; }
.t3 { width: 66px; }
.t4 { width: 34px; }
.t5 { width: 48px; }
.tabs .on { background: #cde6f4; color: #1690dc; font-weight: bold; border-bottom: 2px solid #1493dc; }
.tabs .cur { color: #1690dc; border-bottom: 2px solid #1493dc; }
.groups { flex: 1; display: flex; }
.grp { flex: none; display: flex; flex-direction: column; }
.grp + .grp { border-left: 1px solid #dcdcdc; }
.icons { height: 26px; flex: none; display: flex; align-items: center; justify-content: center; }
.grp label { flex: 1; display: flex; align-items: center; justify-content: center; gap: 2px; font-size: 7.3px; color: #444; white-space: nowrap; }
.i { width: 24px; height: 24px; flex: none; }
.s20 { width: 20px; height: 20px; }
.s22 { width: 21px; height: 21px; }
.s26 { width: 26px; height: 26px; }
.g-create { width: 171px; padding-right: 8px; }
.g-create .icons { justify-content: flex-start; gap: 4.4px; }
.g-smod { width: 93px; }
.g-smod .icons { gap: 4px; }
.g-mod { width: 177px; }
.g-mod .icons { gap: 4px; }
.g-cons { width: 347px; }
.g-cons .icons { gap: 4.6px; }
.g-insp { width: 53px; }
.g-ins { width: 49px; }
.g-sel { width: 52px; }
.g-fin { width: 71px; background: #cde6f4; margin-top: -1px; border-left: 0 !important; }
.g-asm { width: 65px; }
.g-asm .icons { gap: 6px; }
.g-con { width: 68px; }
.g-insp2 { width: 52px; }
.g-sel2 { width: 50px; }

/* Canvas */
.canvas { flex: 1; position: relative; background: #0053a6; overflow: hidden; }
.grid { background-color: #0053a6; background-image:
  linear-gradient(90deg, rgba(150,195,235,.3) 1px, transparent 1px),
  linear-gradient(rgba(150,195,235,.3) 1px, transparent 1px),
  linear-gradient(90deg, rgba(140,185,230,.19) 1px, transparent 1px),
  linear-gradient(rgba(140,185,230,.19) 1px, transparent 1px);
  background-size: 52px 52px, 52px 52px, 10.4px 10.4px, 10.4px 10.4px;
  background-position: 50px 41px, 0 41px, 8.3px 0, 0 0; }
.art { position: absolute; left: 0; top: 0; width: 940px; height: 100%; }

.panel { position: absolute; left: 1px; width: 198px; height: 16px; background: #f1f1f1; border: 1px solid #d8d8d8; display: flex; align-items: center; font-size: 7.3px; color: #666; }
.win-l .panel { left: 2px; }
.browser { top: 3px; }
.win-r .browser { top: 2px; }
.comments { top: 402px; }
.win-r .comments { top: 401px; }
.ptitle { margin-left: 4px; }
.comments .ptitle { margin-left: 16px; }
.pin { font-size: 6px; color: #333; margin-left: 3px; letter-spacing: -1px; }
.dot { width: 5px; height: 5px; border-radius: 50%; background: #333; margin-left: auto; margin-right: 8px; }

/* Tree */
.tree { position: absolute; left: 0; top: 23px; display: flex; flex-direction: column; gap: 2.83px; }
.win-r .tree { top: 22px; }
.line { height: 13px; display: flex; align-items: center; }
.l0 { padding-left: 13px; }
.l1 { padding-left: 24px; }
.l2 { padding-left: 50px; }
.arrow { width: 13px; flex: none; height: 6px; position: relative; }
.arrow::before { content: ""; position: absolute; left: 2px; top: 1px; width: 2px; height: 5px; background: #6f8db0; }
.arrow.open::before { width: 0; height: 0; left: 1px; top: 0; background: none; border-style: solid; border-width: 0 0 5px 5px; border-color: transparent transparent #222 transparent; }
.l1 .arrow { width: 14px; }
.row { height: 13px; display: flex; align-items: center; background: #f1f1f1; padding-right: 4px; font-size: 8px; letter-spacing: .05px; color: #444; position: relative; }
.row .eye { width: 14px; height: 7px; flex: none; color: #dcdcdc; }
.row .eye.on { color: #8b8b8b; }
.row .ico { width: 18px; height: 10px; flex: none; margin-right: 6px; }
.row .ico.gear { width: 14px; margin-right: 8px; }
.l2 .ico { margin-left: 1px; margin-right: 4px; }
.row.sk { min-width: 73px; }
.row.active::after { content: ""; position: absolute; left: 2px; right: 2px; bottom: -1px; height: 2px; background-image: repeating-linear-gradient(135deg, #4a63a6 0 1px, transparent 1px 3px); }
.root { width: 97px; padding-right: 0; }
.rootname { width: 65px; height: 11px; margin-left: 2px; background: #8f8f8f; display: flex; align-items: center; color: #fff; }
.rootname b { font-size: 8px; margin-left: 7px; }
.paper { width: 11px; height: 10px; margin-left: 2px; flex: none; }
.radio { width: 9px; height: 9px; border-radius: 50%; border: 1px solid #888; margin-left: 3px; background: radial-gradient(#444 0 2px, #f1f1f1 2.5px); }

/* View cube */
.cube { position: absolute; left: 888px; top: 23px; width: 31px; height: 31px; background: #7c9cc2; box-shadow: 0 1px 3px rgba(0,30,80,.5); display: flex; align-items: center; justify-content: center; font-size: 7.5px; font-weight: bold; color: #6f85a0; }
.win-r .cube { left: 887px; top: 22px; }
.ax { position: absolute; font-size: 7px; font-style: normal; font-weight: bold; }
.z { right: 1px; top: -9px; color: #1a46c8; }
.x { left: -7px; bottom: 1px; color: #b0446a; }
.y { right: -4px; bottom: -6px; color: #1faa78; }

.palette { position: absolute; left: 924px; top: 74px; width: 14px; height: 133px; background: #f1f1f1; display: flex; flex-direction: column; align-items: center; padding-top: 2px; gap: 3px; font-size: 6.8px; color: #555; }
.palette .pin { margin: 0; }
.vt { writing-mode: vertical-rl; white-space: nowrap; }

.navbar { position: absolute; left: 386px; top: 402px; width: 167px; height: 17px; background: #f7f7f7; border: 1px solid #e9e9e9; display: flex; align-items: center; padding-left: 2px; gap: 3.5px; }
.n { width: 11px; height: 11px; flex: none; }
.n.sp { margin-left: 5px; }

.status { position: absolute; right: 23px; top: 406px; font: bold 7.4px "DejaVu Sans", sans-serif; font-stretch: condensed; color: #e8eef6; white-space: nowrap; }

/* Timeline */
.timeline { height: 33px; flex: none; position: relative; display: flex; align-items: center; background: linear-gradient(#f1f1f1 55%, #dedede); }
.ctl { display: flex; align-items: center; gap: 6.5px; padding-left: 5px; width: 95px; flex: none; }
.ctl svg { width: 10px; height: 10px; flex: none; }
.track { display: flex; gap: 3.8px; padding-bottom: 5px; position: relative; height: 20px; flex: none; }
.track svg { width: 12px; height: 12px; flex: none; }
.track::after { content: ""; position: absolute; left: 5px; right: 5px; bottom: 0; height: 4px; border: 1px solid #c4c4c4; border-top: 0; }
.marker { width: 8px; height: 26px; flex: none; }
.tgear { width: 12px; height: 12px; margin-left: auto; margin-right: 7px; flex: none; }
.tip { position: absolute; left: 546px; top: 3px; width: 60px; height: 19px; background: #2e2e2e; border-radius: 3px; color: #f2f2f2; font-size: 9.5px; line-height: 19px; text-align: center; }
.tip::after { content: ""; position: absolute; left: 25px; bottom: -5px; border-style: solid; border-width: 5px 5px 0; border-color: #2e2e2e transparent transparent; }
.dock { position: absolute; left: 536px; bottom: 0; width: 22px; height: 1px; background: #3a9be0; }
```
